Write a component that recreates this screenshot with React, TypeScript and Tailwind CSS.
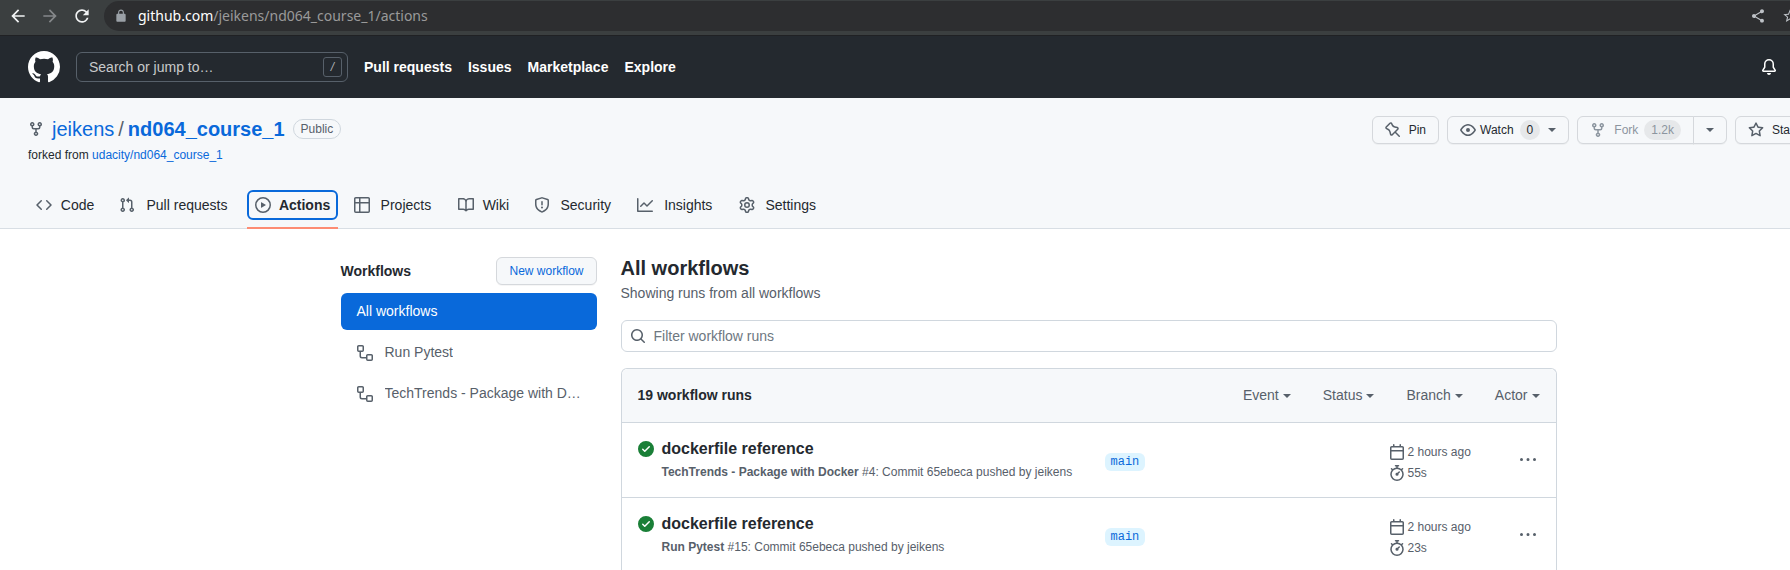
import React from "react";

const paths = {
  fork: "M5 3.25a.75.75 0 11-1.5 0 .75.75 0 011.5 0zm0 2.122a2.25 2.25 0 10-1.5 0v.878A2.25 2.25 0 005.75 8.5h1.5v2.128a2.251 2.251 0 101.5 0V8.5h1.5a2.25 2.25 0 002.25-2.25v-.878a2.25 2.25 0 10-1.5 0v.878a.75.75 0 01-.75.75h-4.5A.75.75 0 015 6.25v-.878zm3.75 7.378a.75.75 0 11-1.5 0 .75.75 0 011.5 0zm3-8.75a.75.75 0 100-1.5.75.75 0 000 1.5z",
  code: "M4.72 3.22a.75.75 0 011.06 1.06L2.06 8l3.72 3.72a.75.75 0 11-1.06 1.06L.47 8.53a.75.75 0 010-1.06l4.25-4.25zm6.56 0a.75.75 0 10-1.06 1.06L13.94 8l-3.72 3.72a.75.75 0 101.06 1.06l4.25-4.25a.75.75 0 000-1.06l-4.25-4.25z",
  pull: "M7.177 3.073L9.573.677A.25.25 0 0110 .854v4.792a.25.25 0 01-.427.177L7.177 3.427a.25.25 0 010-.354zM3.75 2.5a.75.75 0 100 1.5.75.75 0 000-1.5zm-2.25.75a2.25 2.25 0 113 2.122v5.256a2.251 2.251 0 11-1.5 0V5.372A2.25 2.25 0 011.5 3.25zM11 2.5h-1V4h1a1 1 0 011 1v5.628a2.251 2.251 0 101.5 0V5A2.5 2.5 0 0011 2.5zm1 10.25a.75.75 0 111.5 0 .75.75 0 01-1.5 0zM3.75 12a.75.75 0 100 1.5.75.75 0 000-1.5z",
  play: "M1.5 8a6.5 6.5 0 1113 0 6.5 6.5 0 01-13 0zM8 0a8 8 0 100 16A8 8 0 008 0zM6.379 5.227A.25.25 0 006 5.442v5.117a.25.25 0 00.379.214l4.264-2.559a.25.25 0 000-.428L6.379 5.227z",
  table: "M0 1.75C0 .784.784 0 1.75 0h12.5C15.216 0 16 .784 16 1.75v3.585a.746.746 0 010 .83v8.085A1.75 1.75 0 0114.25 16H6.309a.748.748 0 01-1.118 0H1.75A1.75 1.75 0 010 14.25V6.165a.746.746 0 010-.83V1.75zM1.5 6.5v7.75c0 .138.112.25.25.25H5v-8H1.5zM5 5H1.5V1.75a.25.25 0 01.25-.25H5V5zm1.5 1.5v8h7.75a.25.25 0 00.25-.25V6.5h-8zm8-1.5h-8V1.5h7.75a.25.25 0 01.25.25V5z",
  book: "M0 1.75A.75.75 0 01.75 1h4.253c1.227 0 2.317.59 3 1.501A3.744 3.744 0 0111.006 1h4.245a.75.75 0 01.75.75v10.5a.75.75 0 01-.75.75h-4.507a2.25 2.25 0 00-1.591.659l-.622.621a.75.75 0 01-1.06 0l-.622-.621A2.25 2.25 0 005.258 13H.75a.75.75 0 01-.75-.75V1.75zm8.755 3a2.25 2.25 0 012.25-2.25H14.5v9h-3.757c-.71 0-1.4.201-1.992.572l.004-7.322zm-1.504 7.324l.004-5.073-.002-2.253A2.25 2.25 0 005.003 2.5H1.5v9h3.757a3.75 3.75 0 011.994.574z",
  shield: "M7.467.133a1.75 1.75 0 011.066 0l5.25 1.68A1.75 1.75 0 0115 3.48V7c0 1.566-.32 3.182-1.303 4.682-.983 1.498-2.585 2.813-5.032 3.855a1.7 1.7 0 01-1.33 0c-2.447-1.042-4.049-2.357-5.032-3.855C1.32 10.182 1 8.566 1 7V3.48a1.75 1.75 0 011.217-1.667l5.25-1.68zm.61 1.429a.25.25 0 00-.153 0l-5.25 1.68a.25.25 0 00-.174.238V7c0 1.358.275 2.666 1.057 3.86.784 1.194 2.121 2.34 4.366 3.297a.2.2 0 00.154 0c2.245-.956 3.582-2.104 4.366-3.298C13.225 9.666 13.5 8.36 13.5 7V3.48a.25.25 0 00-.174-.237l-5.25-1.68zM9 10.5a1 1 0 11-2 0 1 1 0 012 0zm-.25-5.75a.75.75 0 10-1.5 0v3a.75.75 0 001.5 0v-3z",
  graph: "M1.5 1.75a.75.75 0 00-1.5 0v12.5c0 .414.336.75.75.75h14.5a.75.75 0 000-1.5H1.5V1.75zm14.28 2.53a.75.75 0 00-1.06-1.06L10 7.94 7.53 5.47a.75.75 0 00-1.06 0L3.22 8.72a.75.75 0 001.06 1.06L7 7.06l2.47 2.47a.75.75 0 001.06 0l5.25-5.25z",
  gear: "M7.429 1.525a6.593 6.593 0 011.142 0c.036.003.108.036.137.146l.289 1.105c.147.56.55.967.997 1.189.174.086.341.183.501.29.417.278.97.423 1.53.27l1.102-.303c.11-.03.175.016.195.046.219.31.41.641.573.989.014.031.022.11-.059.19l-.815.806c-.411.406-.562.957-.53 1.456a4.588 4.588 0 010 .582c-.032.499.119 1.05.53 1.456l.815.806c.08.08.073.159.059.19a6.494 6.494 0 01-.573.99c-.02.029-.086.074-.195.045l-1.103-.303c-.559-.153-1.112-.008-1.529.27-.16.107-.327.204-.5.29-.449.222-.851.628-.998 1.189l-.289 1.105c-.029.11-.101.143-.137.146a6.613 6.613 0 01-1.142 0c-.036-.003-.108-.037-.137-.146l-.289-1.105c-.147-.56-.55-.967-.997-1.189a4.502 4.502 0 01-.501-.29c-.417-.278-.97-.423-1.53-.27l-1.102.303c-.11.03-.175-.016-.195-.046a6.492 6.492 0 01-.573-.989c-.014-.031-.022-.11.059-.19l.815-.806c.411-.406.562-.957.53-1.456a4.587 4.587 0 010-.582c.032-.499-.119-1.05-.53-1.456l-.815-.806c-.08-.08-.073-.159-.059-.19a6.44 6.44 0 01.573-.99c.02-.029.086-.075.195-.045l1.103.303c.559.153 1.112.008 1.529-.27.16-.107.327-.204.5-.29.449-.222.851-.628.998-1.189l.289-1.105c.029-.11.101-.143.137-.146zM8 0c-.236 0-.47.01-.701.03-.743.065-1.29.615-1.458 1.261l-.29 1.106c-.017.066-.078.158-.211.224a5.994 5.994 0 00-.668.386c-.123.082-.233.09-.3.071L3.27 2.776c-.644-.177-1.392.02-1.82.63a7.977 7.977 0 00-.704 1.217c-.315.675-.111 1.422.363 1.891l.815.806c.05.048.098.147.088.294a6.084 6.084 0 000 .772c.01.147-.038.246-.088.294l-.815.806c-.474.469-.678 1.216-.363 1.891.2.428.436.835.704 1.218.428.609 1.176.806 1.82.63l1.103-.303c.066-.019.176-.011.299.071.213.143.436.272.668.386.133.066.194.158.212.224l.289 1.106c.169.646.715 1.196 1.458 1.26a8.094 8.094 0 001.402 0c.743-.064 1.29-.614 1.458-1.26l.29-1.106c.017-.066.078-.158.211-.224a5.98 5.98 0 00.668-.386c.123-.082.233-.09.3-.071l1.102.302c.644.177 1.392-.02 1.82-.63.268-.382.505-.789.704-1.217.315-.675.111-1.422-.364-1.891l-.814-.806c-.05-.048-.098-.147-.088-.294a6.1 6.1 0 000-.772c-.01-.147.039-.246.088-.294l.814-.806c.475-.469.679-1.216.364-1.891a7.992 7.992 0 00-.704-1.218c-.428-.609-1.176-.806-1.82-.63l-1.103.303c-.066.019-.176.011-.299-.071a5.991 5.991 0 00-.668-.386c-.133-.066-.194-.158-.212-.224L10.16 1.29C9.99.645 9.444.095 8.701.031A8.094 8.094 0 008 0zm1.5 8a1.5 1.5 0 11-3 0 1.5 1.5 0 013 0zM11 8a3 3 0 11-6 0 3 3 0 016 0z",
  pin: "M4.456.734a1.75 1.75 0 012.826.504l.613 1.327a3.081 3.081 0 002.084 1.707l2.454.584c1.332.317 1.8 1.972.832 2.94L11.06 10l3.72 3.72a.75.75 0 11-1.061 1.06L10 11.06l-2.204 2.205c-.968.968-2.623.5-2.94-.832l-.584-2.454a3.081 3.081 0 00-1.707-2.084l-1.327-.613a1.75 1.75 0 01-.504-2.826L4.456.734zM5.92 1.866a.25.25 0 00-.404-.072L1.794 5.516a.25.25 0 00.072.404l1.328.613A4.582 4.582 0 015.73 9.63l.584 2.454a.25.25 0 00.42.12l5.47-5.47a.25.25 0 00-.12-.42L9.63 5.73a4.581 4.581 0 01-3.098-2.537L5.92 1.866z",
  eye: "M1.679 7.932c.412-.621 1.242-1.75 2.366-2.717C5.175 4.242 6.527 3.5 8 3.5c1.473 0 2.824.742 3.955 1.715 1.124.967 1.954 2.096 2.366 2.717a.119.119 0 010 .136c-.412.621-1.242 1.75-2.366 2.717C10.825 11.758 9.473 12.5 8 12.5c-1.473 0-2.824-.742-3.955-1.715C2.92 9.818 2.09 8.69 1.679 8.068a.119.119 0 010-.136zM8 2c-1.981 0-3.67.992-4.933 2.078C1.797 5.169.88 6.423.43 7.1a1.619 1.619 0 000 1.798c.45.678 1.367 1.932 2.637 3.024C4.329 13.008 6.019 14 8 14c1.981 0 3.67-.992 4.933-2.078 1.27-1.091 2.187-2.345 2.637-3.023a1.619 1.619 0 000-1.798c-.45-.678-1.367-1.932-2.637-3.023C11.671 2.992 9.981 2 8 2zm0 8a2 2 0 100-4 2 2 0 000 4z",
  star: "M8 .25a.75.75 0 01.673.418l1.882 3.815 4.21.612a.75.75 0 01.416 1.279l-3.046 2.97.719 4.192a.75.75 0 01-1.088.791L8 12.347l-3.766 1.98a.75.75 0 01-1.088-.79l.72-4.194L.818 6.374a.75.75 0 01.416-1.28l4.21-.611L7.327.668A.75.75 0 018 .25zm0 2.445L6.615 5.5a.75.75 0 01-.564.41l-3.097.45 2.24 2.184a.75.75 0 01.216.664l-.528 3.084 2.769-1.456a.75.75 0 01.698 0l2.77 1.456-.53-3.084a.75.75 0 01.216-.664l2.24-2.183-3.096-.45a.75.75 0 01-.564-.41L8 2.694v.001z",
  bell: "M8 16a2 2 0 001.985-1.75c.017-.137-.097-.25-.235-.25h-3.5c-.138 0-.252.113-.235.25A2 2 0 008 16zM8 1.5A3.5 3.5 0 004.5 5v2.947c0 .346-.102.683-.294.97l-1.703 2.556a.018.018 0 00-.003.01l.001.006c0 .002.002.004.004.006a.017.017 0 00.006.004l.007.001h10.964l.007-.001a.016.016 0 00.006-.004.016.016 0 00.004-.006l.001-.007a.017.017 0 00-.003-.01l-1.703-2.554a1.75 1.75 0 01-.294-.97V5A3.5 3.5 0 008 1.5zM3 5a5 5 0 0110 0v2.947c0 .05.015.098.042.139l1.703 2.555A1.518 1.518 0 0113.482 13H2.518a1.518 1.518 0 01-1.263-2.36l1.703-2.554A.25.25 0 003 7.947V5z",
  workflow: "M0 1.75C0 .784.784 0 1.75 0h3.5C6.216 0 7 .784 7 1.75v3.5A1.75 1.75 0 015.25 7H4v4a1 1 0 001 1h4v-1.25C9 9.784 9.784 9 10.75 9h3.5c.966 0 1.75.784 1.75 1.75v3.5A1.75 1.75 0 0114.25 16h-3.5A1.75 1.75 0 019 14.25v-.75H5A2.5 2.5 0 012.5 11V7h-.75A1.75 1.75 0 010 5.25v-3.5zm1.75-.25a.25.25 0 00-.25.25v3.5c0 .138.112.25.25.25h3.5a.25.25 0 00.25-.25v-3.5a.25.25 0 00-.25-.25h-3.5zm9 9a.25.25 0 00-.25.25v3.5c0 .138.112.25.25.25h3.5a.25.25 0 00.25-.25v-3.5a.25.25 0 00-.25-.25h-3.5z",
  calendar: "M4.75 0a.75.75 0 01.75.75V2h5V.75a.75.75 0 011.5 0V2h1.25c.966 0 1.75.784 1.75 1.75v10.5A1.75 1.75 0 0113.25 16H2.75A1.75 1.75 0 011 14.25V3.75C1 2.784 1.784 2 2.75 2H4V.75A.75.75 0 014.75 0zm0 3.5h8.5a.25.25 0 01.25.25V6h-11V3.75a.25.25 0 01.25-.25h2zm-2.25 4v6.75c0 .138.112.25.25.25h10.5a.25.25 0 00.25-.25V7.5h-11z",
  stopwatch: "M5.75.75A.75.75 0 016.5 0h3a.75.75 0 010 1.5h-.75v1l-.001.041a6.718 6.718 0 013.464 1.435l.007-.006.75-.75a.75.75 0 111.06 1.06l-.75.75-.006.007a6.75 6.75 0 11-10.548 0L2.72 5.03l-.75-.75a.75.75 0 011.06-1.06l.75.75.007.006A6.718 6.718 0 017.25 2.541a.756.756 0 010-.041v-1H6.5a.75.75 0 01-.75-.75zM8 14.5A5.25 5.25 0 108 4a5.25 5.25 0 000 10.5zm.389-6.7l1.33-1.33a.75.75 0 111.061 1.06L9.45 8.861A1.502 1.502 0 018 10.75a1.5 1.5 0 11.389-2.95z",
  kebab: "M8 9a1.5 1.5 0 100-3 1.5 1.5 0 000 3zM1.5 9a1.5 1.5 0 100-3 1.5 1.5 0 000 3zm13 0a1.5 1.5 0 100-3 1.5 1.5 0 000 3z",
  check: "M8 16A8 8 0 108 0a8 8 0 000 16zm3.78-9.72a.75.75 0 00-1.06-1.06L6.75 9.19 5.28 7.72a.75.75 0 00-1.06 1.06l2 2a.75.75 0 001.06 0l4.5-4.5z",
  search: "M11.5 7a4.499 4.499 0 11-8.998 0A4.499 4.499 0 0111.5 7zm-.82 4.74a6 6 0 111.06-1.06l3.04 3.04a.75.75 0 11-1.06 1.06l-3.04-3.04z",
  github: "M8 0C3.58 0 0 3.58 0 8c0 3.54 2.29 6.53 5.47 7.59.4.07.55-.17.55-.38 0-.19-.01-.82-.01-1.49-2.01.37-2.53-.49-2.69-.94-.09-.23-.48-.94-.82-1.13-.28-.15-.68-.52-.01-.53.63-.01 1.08.58 1.23.82.72 1.21 1.87.87 2.33.66.07-.52.28-.87.51-1.07-1.78-.2-3.64-.89-3.64-3.95 0-.87.31-1.59.82-2.15-.08-.2-.36-1.02.08-2.12 0 0 .67-.21 2.2.82.64-.18 1.32-.27 2-.27.68 0 1.36.09 2 .27 1.53-1.04 2.2-.82 2.2-.82.44 1.1.16 1.92.08 2.12.51.56.82 1.27.82 2.15 0 3.07-1.87 3.75-3.65 3.95.29.25.54.73.54 1.48 0 1.07-.01 1.93-.01 2.2 0 .21.15.46.55.38A8.013 8.013 0 0016 8c0-4.42-3.58-8-8-8z",
};

type IconName = keyof typeof paths;

function Icon({ name, className = "size-4 text-[#57606a]" }: { name: IconName; className?: string }) {
  return (
    <svg viewBox="0 0 16 16" fill="currentColor" fillRule="evenodd" aria-hidden="true" className={`shrink-0 ${className}`}>
      <path d={paths[name]} />
    </svg>
  );
}

/* Shapes on a 24-unit grid, used by the browser toolbar. */
function ToolIcon({ d, className }: { d: string; className: string }) {
  return (
    <svg viewBox="0 0 24 24" fill="currentColor" aria-hidden="true" className={`shrink-0 ${className}`}>
      <path d={d} />
    </svg>
  );
}

function Caret() {
  return <span aria-hidden="true" className="border-x-4 border-t-4 border-x-transparent border-t-[#57606a]" />;
}

const tabs: { label: string; icon: IconName }[] = [
  { label: "Code", icon: "code" },
  { label: "Pull requests", icon: "pull" },
  { label: "Actions", icon: "play" },
  { label: "Projects", icon: "table" },
  { label: "Wiki", icon: "book" },
  { label: "Security", icon: "shield" },
  { label: "Insights", icon: "graph" },
  { label: "Settings", icon: "gear" },
];

const runs = [
  { workflow: "TechTrends - Package with Docker", detail: "#4: Commit 65ebeca pushed by jeikens", duration: "55s" },
  { workflow: "Run Pytest", detail: "#15: Commit 65ebeca pushed by jeikens", duration: "23s" },
];

const button = "flex h-7 shrink-0 items-center border border-[#d5d8dc] bg-[#f6f8fa] text-xs shadow-[0_1px_0_rgba(27,31,36,0.04)]";

function BrowserBar() {
  return (
    <div className="flex h-9 items-start gap-3 overflow-hidden border-b border-[#202124] bg-[#3b3f40] pt-px pl-2">
      <div className="flex h-[30px] items-center gap-3">
        <button type="button" aria-label="Back" className="text-[#f1f3f4]">
          <ToolIcon className="size-5" d="M20 11H7.83l5.59-5.59L12 4l-8 8 8 8 1.41-1.41L7.83 13H20v-2z" />
        </button>
        <button type="button" aria-label="Forward" className="text-[#85888a]">
          <ToolIcon className="size-5" d="M12 4l-1.41 1.41L16.17 11H4v2h12.17l-5.58 5.59L12 20l8-8z" />
        </button>
        <button type="button" aria-label="Reload" className="text-[#f1f3f4]">
          <ToolIcon className="size-5" d="M17.65 6.35A7.958 7.958 0 0012 4c-4.42 0-7.99 3.58-7.99 8s3.57 8 7.99 8c3.73 0 6.84-2.55 7.73-6h-2.08A5.99 5.99 0 0112 18c-3.31 0-6-2.69-6-6s2.69-6 6-6c1.66 0 3.14.69 4.22 1.78L13 11h7V4l-2.35 2.35z" />
        </button>
      </div>
      <div className="flex h-[30px] grow items-center rounded-l-full bg-[#2d2e30] pl-[10px]">
        <ToolIcon className="size-[14px] text-[#9aa0a6]" d="M18 8h-1V6c0-2.76-2.24-5-5-5S7 3.24 7 6v2H6c-1.1 0-2 .9-2 2v10c0 1.1.9 2 2 2h12c1.1 0 2-.9 2-2V10c0-1.1-.9-2-2-2zm-2.900 0H8.900V6c0-1.710 1.390-3.100 3.100-3.100s3.100 1.390 3.100 3.100v2z" />
        <span className="ml-[10px] font-['Noto_Sans',sans-serif] text-sm text-[#9a9a9a]">
          <span className="text-white">github.com</span>/jeikens/nd064_course_1/actions
        </span>
        <div className="-mr-2 ml-auto flex gap-4 text-[#bdc1c6]">
          <button type="button" aria-label="Share">
            <ToolIcon className="size-4" d="M18 16.080c-.760 0-1.440.300-1.960.770L8.910 12.700c.050-.230.090-.460.090-.700s-.040-.470-.090-.700l7.050-4.110c.540.500 1.250.810 2.040.810 1.660 0 3-1.340 3-3s-1.340-3-3-3-3 1.340-3 3c0 .240.040.470.090.700L8.040 9.810C7.500 9.310 6.790 9 6 9c-1.660 0-3 1.340-3 3s1.340 3 3 3c.790 0 1.500-.310 2.040-.810l7.120 4.160c-.050.210-.080.430-.080.650 0 1.610 1.310 2.920 2.920 2.920s2.920-1.310 2.920-2.920-1.310-2.920-2.920-2.920z" />
          </button>
          <button type="button" aria-label="Bookmark">
            <ToolIcon className="size-4" d="M22 9.240l-7.190-.620L12 2 9.190 8.630 2 9.240l5.460 4.730L5.820 21 12 17.270 18.180 21l-1.630-7.030L22 9.240zM12 15.400l-3.760 2.270 1-4.280-3.320-2.880 4.380-.380L12 6.100l1.710 4.040 4.380.380-3.320 2.880 1 4.280L12 15.400z" />
          </button>
        </div>
      </div>
    </div>
  );
}

function SiteHeader() {
  return (
    <header className="flex items-center gap-4 bg-[#24292f] py-[15px] pr-[13px] pl-7 text-sm text-white">
      <a href="#home" aria-label="Homepage"><Icon name="github" className="size-8 text-white" /></a>
      <label className="flex h-[30px] w-[272px] items-center rounded-md border border-[#57606a] pr-[5px] pl-3">
        <input aria-label="Search or jump to" placeholder="Search or jump to…" className="min-w-0 grow bg-transparent outline-none placeholder:text-[#c8c9cb]" />
        <kbd className="flex h-5 w-[19px] items-center justify-center rounded-[3px] border border-[#57606a] font-['Liberation_Sans',sans-serif] text-xs text-[#b0b3b6] italic">/</kbd>
      </label>
      <nav aria-label="Global" className="flex gap-4 font-semibold">
        <a href="#pulls">Pull requests</a>
        <a href="#issues">Issues</a>
        <a href="#marketplace">Marketplace</a>
        <a href="#explore">Explore</a>
      </nav>
      <button type="button" aria-label="Notifications" className="ml-auto"><Icon name="bell" className="size-4 text-white" /></button>
    </header>
  );
}

function RepoHeader() {
  return (
    <div className="border-b border-[#d8dee4] bg-[#f6f8fa] pl-7">
      <div className="flex items-start justify-between pt-[18px]">
        <div className="pt-px">
          <div className="flex h-6 items-center text-xl">
            <Icon name="fork" />
            <a href="#owner" className="ml-2 text-[#0969da]">jeikens</a>
            <span className="mx-1 text-[#57606a]">/</span>
            <a href="#repo" className="font-semibold text-[#0969da]">nd064_course_1</a>
            <span className="ml-2 flex h-5 items-center rounded-full border border-[#d0d7de] px-[7px] text-xs text-[#57606a]">Public</span>
          </div>
          <p className="mt-[5px] text-xs leading-[18px]">
            forked from <a href="#upstream" className="text-[#0969da]">udacity/nd064_course_1</a>
          </p>
        </div>
        <div className="-mr-[17px] flex gap-2">
          <button type="button" className={`${button} gap-2 rounded-md px-3`}><Icon name="pin" />Pin</button>
          <button type="button" className={`${button} rounded-md px-3`}>
            <Icon name="eye" /><span className="mr-[6px] ml-1">Watch</span>
            <span className="mr-2 rounded-full bg-[#e6e8ea] px-[7px] leading-5">0</span><Caret />
          </button>
          <div className="flex">
            <button type="button" disabled className={`${button} rounded-l-md px-3 text-[#8c959f]`}>
              <Icon name="fork" className="size-4 text-[#8c959f]" /><span className="mr-[6px] ml-2">Fork</span>
              <span className="rounded-full bg-[#e6e8ea] px-[7px] leading-5">1.2k</span>
            </button>
            <button type="button" aria-label="Fork options" className={`${button} -ml-px rounded-r-md px-3`}><Caret /></button>
          </div>
          <button type="button" className={`${button} gap-2 rounded-md px-3`}><Icon name="star" />Star</button>
        </div>
      </div>
      <nav aria-label="Repository" className="mt-[18px] -mb-px flex gap-2 text-sm">
        {tabs.map(({ label, icon }) => {
          const active = label === "Actions";
          return (
            <a key={label} href={`#${label}`} aria-current={active ? "page" : undefined} className={`border-b-2 pt-2 pb-[7px] ${active ? "border-[#fd8c73] font-semibold" : "border-transparent"}`}>
              <span className={`flex h-[30px] items-center gap-2 rounded-md px-2 ${active ? "outline-2 -outline-offset-2 outline-[#0969da]" : ""}`}>
                <Icon name={icon} />
                <span data-label={label} className="grid justify-items-center leading-5 before:invisible before:h-0 before:font-semibold before:content-[attr(data-label)]">{label}</span>
              </span>
            </a>
          );
        })}
      </nav>
    </div>
  );
}

function Sidebar() {
  return (
    <aside className="w-64 shrink-0">
      <div className="mb-2 flex items-center justify-between">
        <h2 className="text-sm font-semibold">Workflows</h2>
        <button type="button" className={`${button} rounded-md px-3 text-[#0969da]`}>New workflow</button>
      </div>
      <nav aria-label="Workflows" className="flex flex-col gap-1 text-sm text-[#57606a]">
        <a href="#all" aria-current="page" className="rounded-md bg-[#0969da] px-4 py-2 leading-[21px] text-white">All workflows</a>
        {["Run Pytest", "TechTrends - Package with Docker"].map((name) => (
          <a key={name} href={`#${name}`} className="flex items-center gap-3 rounded-md py-2 pr-3 pl-4 leading-[21px]">
            <Icon name="workflow" /><span className="truncate">{name}</span>
          </a>
        ))}
      </nav>
    </aside>
  );
}

function RunList() {
  return (
    <section className="min-w-0 grow">
      <h1 className="text-xl leading-[22px] font-semibold">All workflows</h1>
      <p className="mt-1 text-sm leading-[21px] text-[#57606a]">Showing runs from all workflows</p>
      <label className="mt-4 flex h-8 items-center gap-2 rounded-md border border-[#d0d7de] px-2">
        <Icon name="search" />
        <input aria-label="Filter workflow runs" placeholder="Filter workflow runs" className="min-w-0 grow bg-transparent text-sm outline-none placeholder:text-[#6e7781]" />
      </label>
      <div className="mt-4 rounded-t-md border border-b-0 border-[#d0d7de]">
        <div className="flex items-center justify-between rounded-t-md bg-[#f6f8fa] px-4 py-4 text-sm leading-[21px]">
          <strong className="font-semibold">19 workflow runs</strong>
          <div className="flex gap-8 text-[#57606a]">
            {["Event", "Status", "Branch", "Actor"].map((name) => (
              <button key={name} type="button" className="flex items-center gap-1">{name}<Caret /></button>
            ))}
          </div>
        </div>
        <ul>
          {runs.map((run) => (
            <li key={run.workflow} className="flex h-[75px] items-center border-t border-[#d0d7de] px-4 text-xs text-[#57606a]">
              <div className="flex grow gap-2 pb-[2px]">
                <Icon name="check" className="mt-1 size-4 text-[#1a7f37]" />
                <div>
                  <a href="#run" className="block text-base leading-6 font-semibold text-[#24292f]">dockerfile reference</a>
                  <p className="mt-[2px] leading-[18px]"><span className="font-semibold">{run.workflow}</span> {run.detail}</p>
                </div>
              </div>
              <div className="w-[284px] pt-1">
                <a href="#main" className="inline-block rounded-md bg-[#ddf4ff] px-[6px] font-['Liberation_Mono',monospace] leading-[18px] text-[#0969da]">main</a>
              </div>
              <div className="flex w-[131px] flex-col gap-[3px] pt-1 leading-[18px]">
                <span className="flex items-center gap-[3px]"><Icon name="calendar" />2 hours ago</span>
                <span className="flex items-center gap-[3px]"><Icon name="stopwatch" />{run.duration}</span>
              </div>
              <button type="button" aria-label="Run options" className="mr-1"><Icon name="kebab" /></button>
            </li>
          ))}
        </ul>
      </div>
    </section>
  );
}

export default function App() {
  return (
    <div className="overflow-hidden bg-white font-['Liberation_Sans',Arial,sans-serif] text-[#24292f]">
      <BrowserBar />
      <SiteHeader />
      <RepoHeader />
      <main className="pt-7 pl-[107px]">
        <div className="mx-auto flex max-w-[1216px] gap-6">
          <Sidebar />
          <RunList />
        </div>
      </main>
    </div>
  );
}
